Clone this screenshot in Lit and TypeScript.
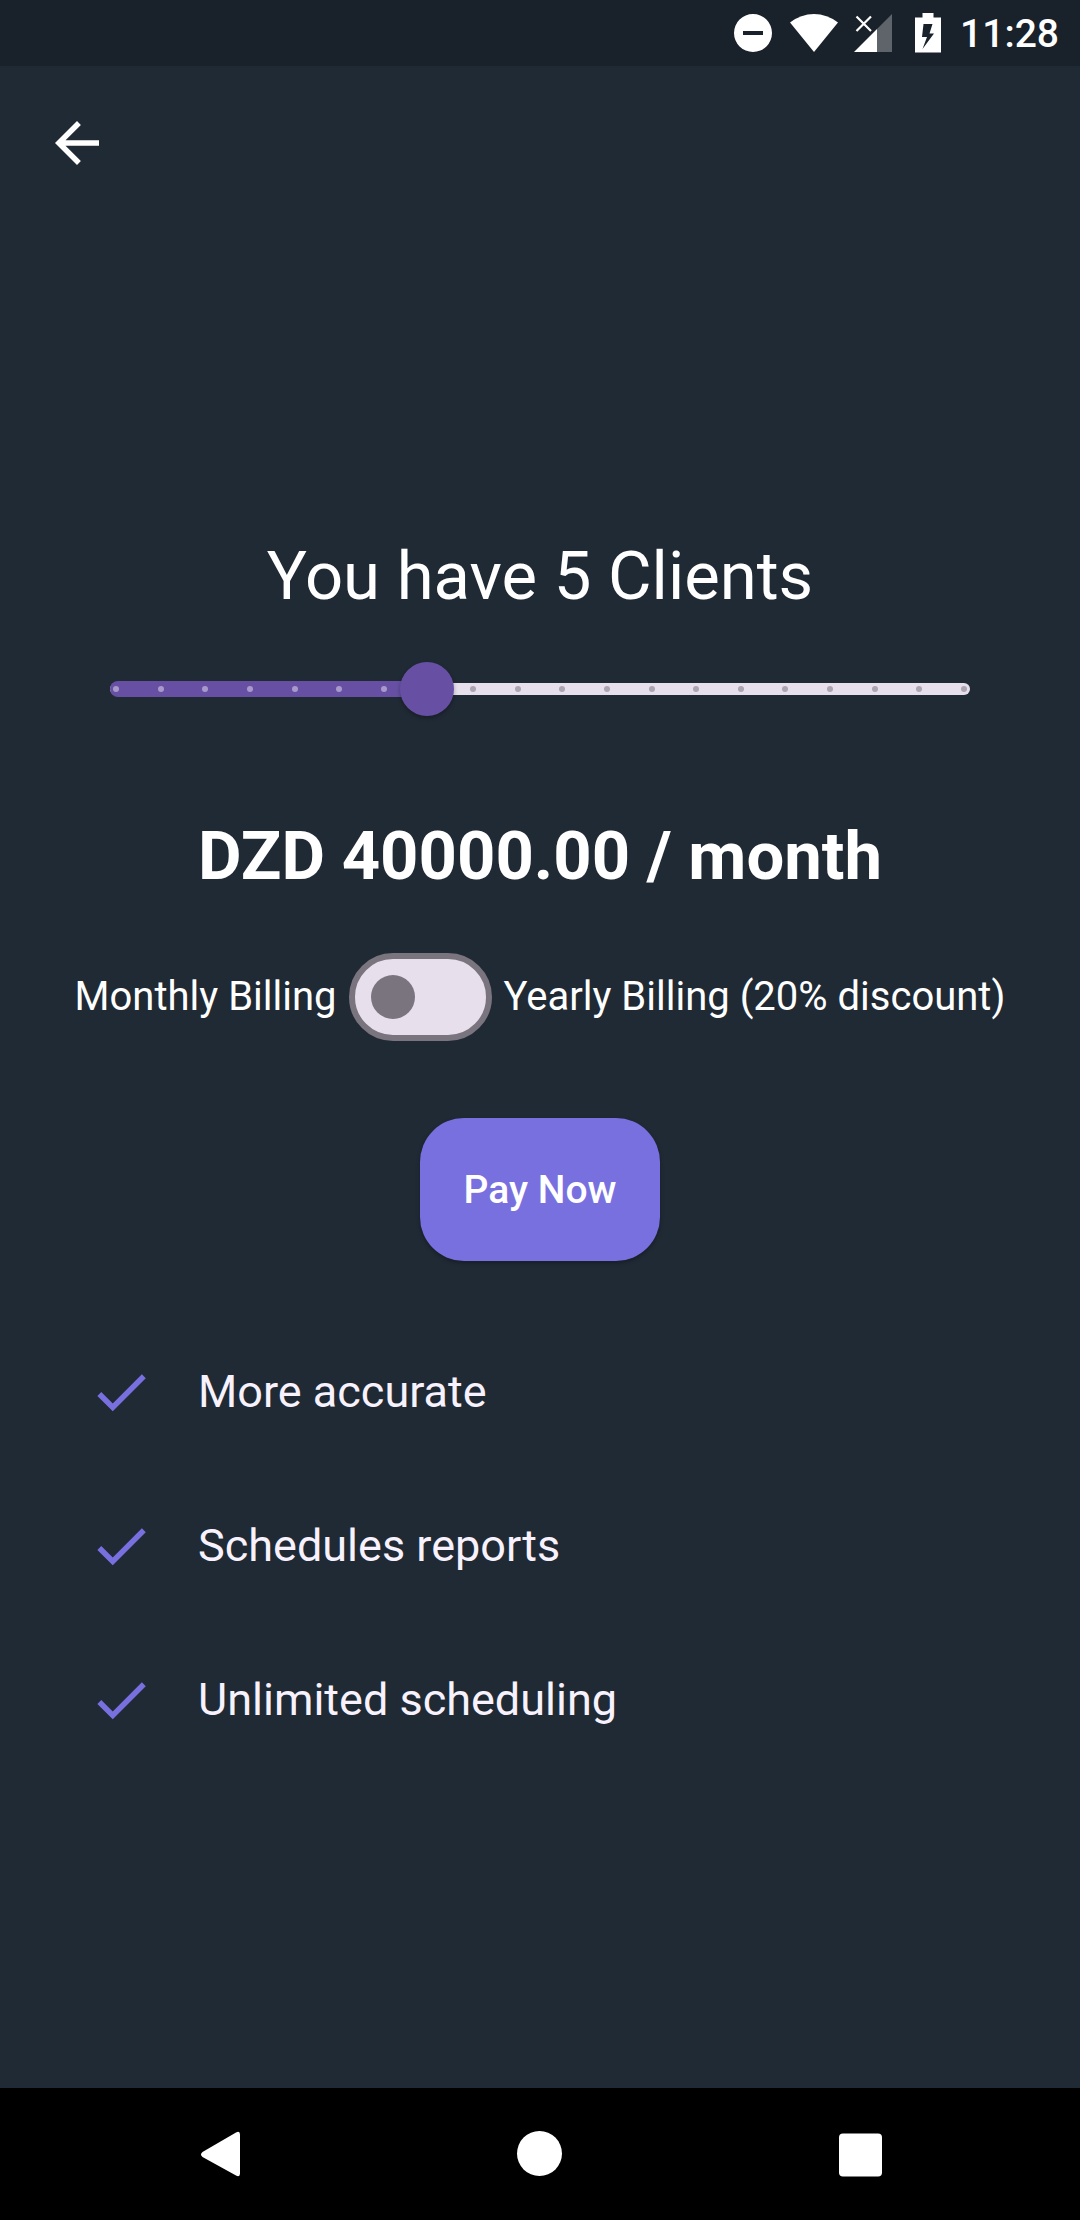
import { LitElement, html, css, svg } from "lit";
import { customElement, state } from "lit/decorators.js";

const STEPS = 19;
const PRICE_PER_CLIENT = 8000;
const FEATURES = ["More accurate", "Schedules reports", "Unlimited scheduling"];

@customElement("status-bar")
class StatusBar extends LitElement {
  static styles = css`
    :host {
      display: flex;
      align-items: center;
      justify-content: flex-end;
      height: 66px;
      padding-right: 21px;
      background: #19212a;
      color: #fff;
    }
    .icon {
      display: block;
      height: 66px;
      fill: currentColor;
    }
    .time {
      margin-left: 18px;
      padding-top: 2px;
      font-size: 39px;
      line-height: 66px;
      font-weight: 500;
    }
  `;

  render() {
    return html`
      <svg class="icon" width="210" viewBox="732 0 210 66" aria-hidden="true">
        <path fill-rule="evenodd" d="M753 14a19 19 0 1 0 0 38a19 19 0 1 0 0-38zM743 31h20v4h-20z" />
        <path d="M790 22.500Q801 14 814 14T838 22.500L814 52z" />
        <path opacity=".3" d="M892 14V52H877V29z" />
        <path d="M877 29V52H854z" />
        <path d="M856.500 16.500L871 31M871 16.500L856.500 31" fill="none" stroke="currentColor" stroke-width="2.200" />
        <path fill-rule="evenodd" d="M915 17.500h7.500V13h11v4.500H941V52.500H915zM923.500 24L922 37H927L922.500 49L934 33.500H929.500L932.500 24z" />
      </svg>
      <time class="time">11:28</time>
    `;
  }
}

@customElement("step-slider")
class StepSlider extends LitElement {
  static properties = { value: { type: Number } };
  declare value: number;

  static styles = css`
    :host {
      display: grid;
      align-items: center;
      height: 136px;
      padding: 0 83px;
    }
    .track,
    .input {
      grid-area: 1 / 1;
    }
    .track {
      display: grid;
      align-items: center;
      margin: 0 27px;
    }
    .rail,
    .fill,
    .dots {
      grid-area: 1 / 1;
      box-sizing: border-box;
    }
    .rail {
      height: 12px;
      border-radius: 6px;
      background: #e7e0ec;
    }
    .fill {
      height: 16px;
      border-radius: 8px 0 0 8px;
      background: #6750a4;
    }
    .dots {
      display: flex;
      justify-content: space-between;
      padding: 0 3px;
    }
    .dot {
      width: 6px;
      height: 6px;
      border-radius: 50%;
      background: #aba4b1;
    }
    .dot.on {
      background: #a899cb;
    }
    .input {
      appearance: none;
      width: 100%;
      height: 54px;
      margin: 0;
      background: transparent;
      cursor: pointer;
    }
    .input::-webkit-slider-thumb {
      appearance: none;
      width: 54px;
      height: 54px;
      border-radius: 50%;
      background: #6750a4;
      box-shadow: 0 2px 4px rgba(0, 0, 0, 0.3);
    }
  `;

  private onInput(e: Event) {
    const value = Number((e.target as HTMLInputElement).value);
    this.dispatchEvent(new CustomEvent("step-change", { detail: value }));
  }

  render() {
    const dots = Array.from({ length: STEPS + 1 }, (_, i) => i);
    return html`
      <div class="track">
        <div class="rail"></div>
        <div class="fill" style="width:${(this.value / STEPS) * 100}%"></div>
        <div class="dots">
          ${dots.map((i) => html`<span class="dot ${i <= this.value ? "on" : ""}"></span>`)}
        </div>
      </div>
      <input
        class="input"
        type="range"
        aria-label="Clients"
        min="0"
        max=${STEPS}
        .value=${String(this.value)}
        @input=${this.onInput}
      />
    `;
  }
}

@customElement("nav-bar")
class NavBar extends LitElement {
  static styles = css`
    :host {
      display: grid;
      grid-template-columns: repeat(3, 1fr);
      height: 132px;
      padding: 0 60px;
      background: #000;
    }
    .key {
      display: flex;
      align-items: center;
      justify-content: center;
      padding: 0;
      border: 0;
      background: none;
      color: #fff;
    }
    .glyph {
      display: block;
      width: 66px;
      height: 66px;
      fill: currentColor;
    }
  `;

  private key(label: string, shape: unknown) {
    return html`
      <button class="key" aria-label=${label}>
        <svg class="glyph" viewBox="0 0 66 66">${shape}</svg>
      </button>
    `;
  }

  render() {
    return html`
      ${this.key("Back", svg`<path d="M15.500 31L49 11.500Q53 9.500 53 13.500V52.500Q53 56.500 49 54.500L15.500 36Q12.500 33.500 15.500 31z" />`)}
      ${this.key("Home", svg`<circle cx="32.500" cy="32.500" r="22.500" />`)}
      ${this.key("Recent apps", svg`<rect x="12" y="12.500" width="43" height="43" rx="4" />`)}
    `;
  }
}

@customElement("app-root")
class AppRoot extends LitElement {
  @state() private position = 7;
  @state() private yearly = false;

  static styles = css`
    :host {
      display: flex;
      flex-direction: column;
      min-height: 100vh;
      background: #202a35;
      color: #fff;
      font-family: Roboto, sans-serif;
    }
    .header {
      display: flex;
      align-items: center;
      height: 154px;
      padding: 0 44px;
    }
    .back {
      display: flex;
      padding: 0;
      border: 0;
      background: none;
      color: inherit;
    }
    .icon {
      display: block;
      flex: none;
      width: 66px;
      height: 66px;
      fill: currentColor;
    }
    .main {
      flex: 1;
      display: flex;
      flex-direction: column;
      justify-content: center;
    }
    .title,
    .price {
      margin: 0;
      font-size: 67px;
      line-height: 90px;
      text-align: center;
    }
    .title {
      font-weight: 400;
    }
    .price {
      margin-top: 54px;
      font-weight: 700;
    }
    .billing {
      display: flex;
      align-items: center;
      justify-content: center;
      gap: 12px;
      margin-top: 52px;
      font-size: 40px;
      line-height: 44px;
    }
    .switch {
      appearance: none;
      box-sizing: border-box;
      display: flex;
      align-items: center;
      flex: none;
      width: 143px;
      height: 88px;
      margin: 0;
      padding: 0 16px;
      border: 6px solid #79747e;
      border-radius: 44px;
      background: #e7e0ec;
      cursor: pointer;
    }
    .switch::before {
      content: "";
      width: 44px;
      height: 44px;
      border-radius: 50%;
      background: #79747e;
    }
    .switch:checked {
      justify-content: flex-end;
      border-color: #6750a4;
      background: #6750a4;
    }
    .switch:checked::before {
      background: #fff;
    }
    .pay {
      align-self: center;
      height: 143px;
      margin-top: 77px;
      padding: 0 44px;
      border: 0;
      border-radius: 44px;
      background: #7970e0;
      box-shadow: 0 2px 4px rgba(0, 0, 0, 0.3);
      color: #fff;
      font-family: inherit;
      font-size: 39px;
      font-weight: 500;
      cursor: pointer;
    }
    .features {
      margin: 54px 0 0;
      padding: 0 88px;
      list-style: none;
    }
    .feature {
      display: flex;
      align-items: center;
      gap: 44px;
      height: 154px;
      color: #f7f2fd;
      font-size: 45px;
      line-height: 66px;
    }
    .check {
      color: #7970e0;
    }
  `;

  render() {
    const clients = Math.round(1 + (this.position * 11) / STEPS);
    const monthly = clients * PRICE_PER_CLIENT;
    const price = this.yearly ? monthly * 12 * 0.8 : monthly;
    return html`
      <status-bar></status-bar>
      <header class="header">
        <button class="back" aria-label="Back">
          <svg class="icon" viewBox="0 0 24 24">
            <path d="M20 11H7.830l5.590-5.590L12 4l-8 8 8 8 1.410-1.410L7.830 13H20v-2z" />
          </svg>
        </button>
      </header>
      <main class="main">
        <h1 class="title">You have ${clients} Clients</h1>
        <step-slider
          .value=${this.position}
          @step-change=${(e: CustomEvent<number>) => (this.position = e.detail)}
        ></step-slider>
        <p class="price">DZD ${price.toFixed(2)} / ${this.yearly ? "year" : "month"}</p>
        <div class="billing">
          <label for="yearly">Monthly Billing</label>
          <input
            class="switch"
            id="yearly"
            type="checkbox"
            role="switch"
            .checked=${this.yearly}
            @change=${(e: Event) => (this.yearly = (e.target as HTMLInputElement).checked)}
          />
          <label for="yearly">Yearly Billing (20% discount)</label>
        </div>
        <button class="pay">Pay Now</button>
        <ul class="features">
          ${FEATURES.map(
            (text) => html`
              <li class="feature">
                <svg class="icon check" viewBox="0 0 24 24" aria-hidden="true">
                  <path d="M9 16.170L4.830 12l-1.420 1.410L9 19 21 7l-1.410-1.410z" />
                </svg>
                <span>${text}</span>
              </li>
            `
          )}
        </ul>
      </main>
      <nav-bar></nav-bar>
    `;
  }
}
